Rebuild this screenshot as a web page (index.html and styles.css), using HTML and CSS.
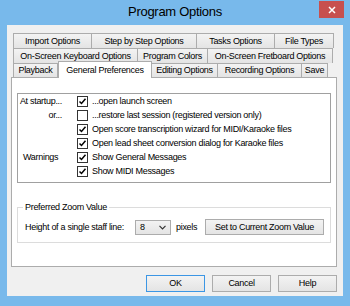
FILE: index.html
```html
<!DOCTYPE html>
<html lang="en">

<head>
    <meta charset="UTF-8" />
    <title>Program Options</title>
    <link rel="stylesheet" href="styles.css">
</head>

<body>
    <div class="window">
        <div class="titlebar">
            <span></span>
            <div class="title">Program Options</div>
            <div class="close">
                <svg width="8" height="8" viewBox="0 0 8 8">
                    <path d="M1 1 L7 7 M7 1 L1 7" stroke="#fff" stroke-width="1.5" />
                </svg>
            </div>
        </div>

        <div class="client">
            <div class="tabs">
                <div class="tab-row row-1">
                    <div class="tab">Import Options</div>
                    <div class="tab">Step by Step Options</div>
                    <div class="tab">Tasks Options</div>
                    <div class="tab">File Types</div>
                </div>
                <div class="tab-row row-2">
                    <div class="tab">On-Screen Keyboard Options</div>
                    <div class="tab">Program Colors</div>
                    <div class="tab">On-Screen Fretboard Options</div>
                </div>
                <div class="tab-row row-3">
                    <div class="tab">Playback</div>
                    <div class="tab active">General Preferences</div>
                    <div class="tab">Editing Options</div>
                    <div class="tab">Recording Options</div>
                    <div class="tab">Save</div>
                </div>
            </div>

            <div class="panel">
                <div class="startup">
                    <span class="label right">At startup...</span>
                    <label class="check"><span class="box"><svg viewBox="0 0 9 9"><polyline points="1.5,4.5 3.5,6.5 7.5,1.8" /></svg></span>...open launch screen</label>

                    <span class="label right">or...</span>
                    <label class="check"><span class="box"></span>...restore last session (registered version only)</label>

                    <span></span>
                    <label class="check"><span class="box"><svg viewBox="0 0 9 9"><polyline points="1.5,4.5 3.5,6.5 7.5,1.8" /></svg></span>Open score transcription wizard for MIDI/Karaoke files</label>

                    <span></span>
                    <label class="check"><span class="box"><svg viewBox="0 0 9 9"><polyline points="1.5,4.5 3.5,6.5 7.5,1.8" /></svg></span>Open lead sheet conversion dialog for Karaoke files</label>

                    <span class="label">Warnings</span>
                    <label class="check"><span class="box"><svg viewBox="0 0 9 9"><polyline points="1.5,4.5 3.5,6.5 7.5,1.8" /></svg></span>Show General Messages</label>

                    <span></span>
                    <label class="check"><span class="box"><svg viewBox="0 0 9 9"><polyline points="1.5,4.5 3.5,6.5 7.5,1.8" /></svg></span>Show MIDI Messages</label>
                </div>

                <fieldset class="zoom">
                    <legend>Preferred Zoom Value</legend>
                    <div class="zoom-row">
                        <span class="zoom-label">Height of a single staff line:</span>
                        <div class="combo">
                            <span>8</span>
                            <svg width="7" height="5" viewBox="0 0 7 5">
                                <polyline points="0.5,0.8 3.5,3.8 6.5,0.8" fill="none" stroke="#333" stroke-width="1.2" />
                            </svg>
                        </div>
                        <span class="unit">pixels</span>
                        <button class="btn wide">Set to Current Zoom Value</button>
                    </div>
                </fieldset>
            </div>

            <div class="actions">
                <button class="btn default">OK</button>
                <button class="btn">Cancel</button>
                <button class="btn">Help</button>
            </div>
        </div>
    </div>
</body>

</html>
```

FILE: styles.css
```css
:root {
    --frame: #78b9eb;
    --face: #f0f0f0;
    --edge: #acacac;
    --text: #000;
}

* {
    box-sizing: border-box;
}

body {
    margin: 0;
    font-family: 'Liberation Sans', Arial, sans-serif;
    font-size: 9px;
    letter-spacing: -0.3px;
    line-height: 11px;
    color: var(--text);
}

.window {
    width: 350px;
    height: 306px;
    background: var(--frame);
    display: flex;
    flex-direction: column;
}

.titlebar {
    height: 25px;
    flex: none;
    display: grid;
    grid-template-columns: 1fr auto 1fr;
}

.title {
    font-size: 13px;
    letter-spacing: -0.3px;
    line-height: 24px;
}

.close {
    justify-self: end;
    width: 25px;
    height: 17px;
    margin: 1px 6px 0 0;
    background: #c7504f;
    display: flex;
    align-items: center;
    justify-content: center;
}

.client {
    flex: 1;
    margin: 0 7px 10px;
    padding: 8px 6px 0 4px;
    background: var(--face);
}

/* tab strip */

.tabs {
    padding-left: 2px;
}

.tab-row {
    display: grid;
    height: 15px;
}

.row-1 {
    grid-template-columns: 79px 105px 78px 59px;
}

.row-2 {
    grid-template-columns: 125px 70px 125px;
}

.row-3 {
    grid-template-columns: 45px 94px 66px 84px 26px;
    height: 14px;
}

.tab {
    display: flex;
    align-items: center;
    justify-content: center;
    white-space: nowrap;
    border-top: 1px solid var(--edge);
    border-right: 1px solid var(--edge);
    background: linear-gradient(#f3f3f3, #e4e4e4);
}

.tab:first-child {
    border-left: 1px solid var(--edge);
}

.tab.active {
    position: relative;
    z-index: 1;
    margin: -2px 0 -1px;
    border-left: 1px solid var(--edge);
    background: #fff;
}

.panel {
    width: 326px;
    height: 190px;
    padding: 15px 0 0 5px;
    border: 1px solid var(--edge);
    background: #fff;
}

/* startup options */

.startup {
    width: 314px;
    padding: 0 0 4px 5px;
    border: 1px solid #a0a0a0;
    display: grid;
    grid-template-columns: 39px 1fr;
    grid-auto-rows: 14px;
    column-gap: 15px;
    align-items: center;
}

.label {
    white-space: nowrap;
}

.label.right {
    justify-self: end;
}

.check {
    display: flex;
    align-items: center;
    gap: 4px;
    white-space: nowrap;
}

.box {
    width: 11px;
    height: 11px;
    flex: none;
    border: 1px solid #333;
    background: #fff;
}

.box svg {
    display: block;
    width: 9px;
    height: 9px;
    fill: none;
    stroke: #000;
    stroke-width: 1.5;
}

/* zoom group */

.zoom {
    width: 314px;
    height: 41px;
    margin: 19px 0 0;
    padding: 6px 6px 0 7px;
    border: 1px solid #dcdcdc;
}

.zoom legend {
    margin-left: -2px;
    padding: 0 2px;
}

.zoom-row {
    display: flex;
    align-items: center;
    height: 16px;
}

.zoom-label {
    width: 110px;
    white-space: nowrap;
}

.combo {
    width: 36px;
    height: 15px;
    padding: 0 4px;
    border: 1px solid var(--edge);
    background: linear-gradient(#f3f3f3, #e4e4e4);
    display: flex;
    align-items: center;
    justify-content: space-between;
}

.unit {
    margin-left: 5px;
}

.btn {
    height: 17px;
    padding: 0;
    border: 1px solid var(--edge);
    background: linear-gradient(#f3f3f3, #e4e4e4);
    font: inherit;
    letter-spacing: inherit;
    color: var(--text);
    white-space: nowrap;
}

.btn.wide {
    width: 119px;
    height: 16px;
    margin-left: auto;
}

.btn.default {
    border-color: #3c96e4;
}

.actions {
    display: flex;
    justify-content: flex-end;
    gap: 7px;
    margin-top: 8px;
}

.actions .btn {
    width: 59px;
}
```
